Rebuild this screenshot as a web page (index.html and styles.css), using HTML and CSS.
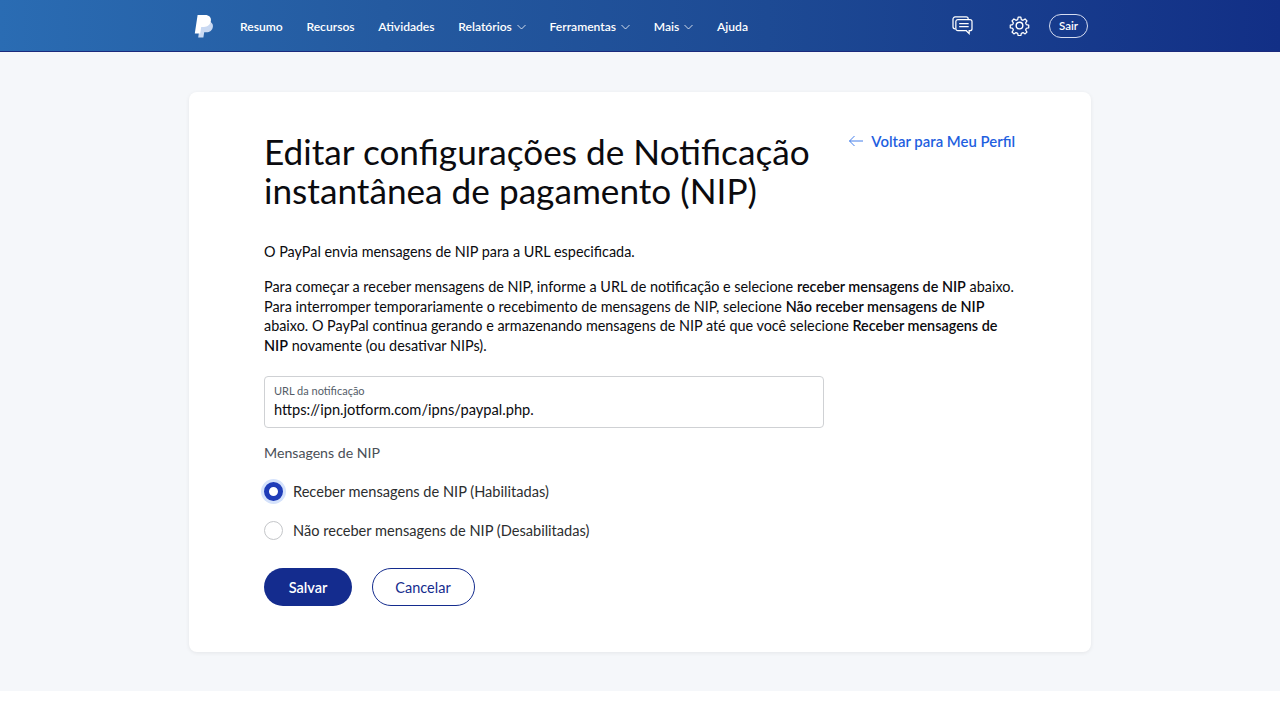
FILE: index.html
```html
<!DOCTYPE html>
<html lang="pt-BR">
<head>
<meta charset="utf-8">
<title>Editar configurações de NIP</title>
<link rel="stylesheet" href="styles.css">
</head>
<body>
<header class="topbar">
  <div class="topbar-inner">
    <svg class="logo" width="20" height="24" viewBox="0 0 20 24" aria-hidden="true">
      <path fill="#c9d9f2" d="M6.5 7.5h7.2c3.4 0 5.6 2 5.2 5.2-.5 3.6-3.2 5.6-6.4 5.6h-2.3l-.8 5.2H4.2z"/>
      <path fill="#ffffff" d="M3.6 1h7.6c3.8 0 6.2 2.2 5.7 5.8-.5 3.900-3.4 6.100-7 6.100H7.2l-1 6.500H.8z"/>
    </svg>
    <nav class="nav">
      <a class="nav-item">Resumo</a>
      <a class="nav-item">Recursos</a>
      <a class="nav-item">Atividades</a>
      <a class="nav-item">Relatórios <svg class="chev" width="9" height="6" viewBox="0 0 9 6"><path d="M.5 1l4 4 4-4" fill="none" stroke="#fff" stroke-width=".8"/></svg></a>
      <a class="nav-item">Ferramentas <svg class="chev" width="9" height="6" viewBox="0 0 9 6"><path d="M.5 1l4 4 4-4" fill="none" stroke="#fff" stroke-width=".8"/></svg></a>
      <a class="nav-item">Mais <svg class="chev" width="9" height="6" viewBox="0 0 9 6"><path d="M.5 1l4 4 4-4" fill="none" stroke="#fff" stroke-width=".8"/></svg></a>
      <a class="nav-item">Ajuda</a>
    </nav>
    <div class="tools">
      <svg class="msg" width="21" height="19" viewBox="0 0 22 20" fill="none" stroke="#fff" stroke-width="1.3" aria-hidden="true">
        <path d="M3.5 13.5h-.3A2.2 2.2 0 0 1 1 11.300V3.200A2.200 2.200 0 0 1 3.200 1h11.600A2.200 2.200 0 0 1 17 3.200v.3"/>
        <path d="M6.200 3.700h12.600A2.200 2.200 0 0 1 21 5.900v7.400a2.200 2.200 0 0 1-2.200 2.200h-.8v3l-3-3H6.200A2.200 2.200 0 0 1 4 13.300V5.900a2.200 2.200 0 0 1 2.200-2.200z"/>
        <path d="M7.500 8h10M7.500 11.300h10"/>
      </svg>
      <svg class="gear" width="21" height="21" viewBox="0 0 24 24" fill="none" stroke="#fff" stroke-width="1.600" aria-hidden="true">
        <circle cx="12" cy="12" r="3.800"/>
        <path d="M10.300 1.500h3.400l.6 3 2.200.9 2.600-1.700 2.400 2.400-1.700 2.600.9 2.200 3 .6v3.400l-3 .6-.9 2.200 1.700 2.600-2.400 2.400-2.600-1.700-2.200.9-.6 3h-3.400l-.6-3-2.200-.9-2.600 1.700-2.400-2.400 1.700-2.600-.9-2.200-3-.6v-3.400l3-.6.9-2.200-1.700-2.600 2.400-2.400 2.600 1.700 2.200-.9z" stroke-linejoin="round" transform="translate(1.200 1.200) scale(.9)"/>
      </svg>
      <a class="logout">Sair</a>
    </div>
  </div>
</header>
<main class="page">
  <section class="card">
    <div class="head">
      <h1 class="title">Editar configurações de Notificação instantânea de pagamento (NIP)</h1>
      <a class="back"><svg width="16" height="12" viewBox="0 0 16 12" aria-hidden="true"><path d="M15 6H1.500M6.500 1L1.500 6l5 5" fill="none" stroke="#2f6fe8" stroke-width=".9"/></svg>Voltar para Meu Perfil</a>
    </div>
    <p class="text first">O PayPal envia mensagens de NIP para a URL especificada.</p>
    <p class="text">Para começar a receber mensagens de NIP, informe a URL de notificação e selecione <b>receber mensagens de NIP</b> abaixo. Para interromper temporariamente o recebimento de mensagens de NIP, selecione <b>Não receber mensagens de NIP</b> abaixo. O PayPal continua gerando e armazenando mensagens de NIP até que você selecione <b>Receber mensagens de NIP</b> novamente (ou desativar NIPs).</p>
    <div class="field">
      <span class="field-label">URL da notificação</span>
      <span class="field-value">https://ipn.jotform.com/ipns/paypal.php.</span>
    </div>
    <div class="group-label">Mensagens de NIP</div>
    <div class="radio-row"><span class="radio on"></span>Receber mensagens de NIP (Habilitadas)</div>
    <div class="radio-row"><span class="radio"></span>Não receber mensagens de NIP (Desabilitadas)</div>
    <div class="actions">
      <a class="btn primary">Salvar</a>
      <a class="btn secondary">Cancelar</a>
    </div>
  </section>
</main>
</body>
</html>
```
FILE: styles.css
```css
* { box-sizing: border-box; }
html, body { margin: 0; background: #fff; }
body { font-family: Lato, "Noto Sans", sans-serif; color: #0b0b0f; }
.topbar {
  height: 52px;
  background: linear-gradient(90deg, #2a6cb3 0%, #245aa0 30%, #1d4a94 60%, #122f86 100%);
  border-bottom: 1px solid #1b2a7c;
}
.topbar-inner { width: 904px; margin-left: 194px; height: 51px; display: flex; align-items: center; }
.logo { flex: none; }
.nav { display: flex; gap: 23.7px; margin: 2px 0 0 26px; }
.nav-item { color: #fff; font-size: 12.1px; font-weight: 600; white-space: nowrap; }
.chev { margin-left: 2px; vertical-align: 1px; }
.tools { margin-left: auto; margin-right: 10px; display: flex; align-items: center; }
.msg { margin-right: 36px; }
.gear { margin-right: 19px; }
.logout { height: 24px; width: 39px; border: 1px solid #d5dcf0; border-radius: 12px; color: #fff; font-size: 11.5px; font-weight: 600; display: flex; align-items: center; justify-content: center; }
.page { height: 639px; background: #f5f7fa; padding: 40px 0 0 189px; }
.card { width: 902px; height: 560px; background: #fff; border-radius: 8px; box-shadow: 0 1px 4px rgba(0,0,0,.07); padding: 40px 76px 0 75px; }
.head { display: flex; justify-content: space-between; align-items: flex-start; }
.title { margin: 0; width: 560px; font-size: 35.2px; line-height: 39px; font-weight: 400; }
.back { margin-top: 0; color: #1f5fe0; font-size: 14.9px; font-weight: 600; white-space: nowrap; display: flex; align-items: center; gap: 7px; }
.text { margin: 0 0 15.5px; font-size: 14.4px; line-height: 19.5px; }
.text b { font-weight: 600; }
.text.first { margin-top: 32px; }
.field { margin-top: 21px; width: 560px; height: 52px; border: 1px solid #cfd1d4; border-radius: 4px; padding: 7px 9px 0; display: flex; flex-direction: column; }
.field-label { font-size: 11px; line-height: 14px; color: #545d68; }
.field-value { font-size: 14.65px; line-height: 24px; }
.group-label { margin-top: 15px; font-size: 14.15px; line-height: 20px; color: #4a4f57; }
.radio-row { display: flex; align-items: center; gap: 10px; height: 20px; margin-top: 18px; font-size: 14.6px; color: #2c2e2f; }
.radio-row + .radio-row { margin-top: 19.5px; }
.radio { width: 19px; height: 19px; border-radius: 50%; border: 1px solid #c4c6c9; background: #fff; flex: none; }
.radio.on { border: 5px solid #1f3cb8; box-shadow: 0 0 0 3px #d5e2fb; }
.actions { display: flex; gap: 19.5px; margin-top: 27.5px; }
.btn { height: 38px; border-radius: 19px; font-size: 14.5px; display: flex; align-items: center; justify-content: center; }
.primary { width: 88px; background: #142c8e; color: #fff; font-weight: 600; }
.secondary { width: 103px; border: 1px solid #142c8e; color: #142c8e; }
```
